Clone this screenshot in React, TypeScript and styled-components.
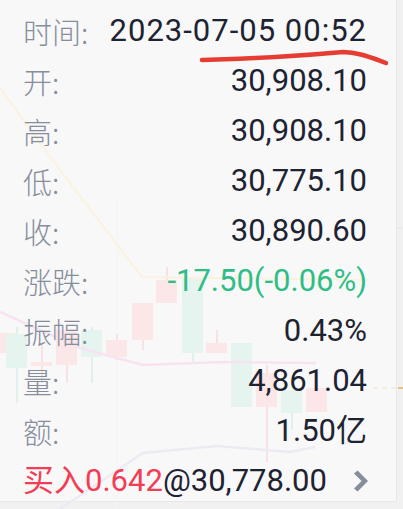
import styled, { createGlobalStyle } from "styled-components";

const GlobalStyle = createGlobalStyle`
  html, body {
    margin: 0;
    padding: 0;
    background: #f1f1f2;
  }
`;

interface Row {
  label: string;
  value: string;
  tone?: "down";
  wide?: boolean;
}

const rows: Row[] = [
  { label: "时间:", value: "2023-07-05 00:52", wide: true },
  { label: "开:", value: "30,908.10" },
  { label: "高:", value: "30,908.10" },
  { label: "低:", value: "30,775.10" },
  { label: "收:", value: "30,890.60" },
  { label: "涨跌:", value: "-17.50(-0.06%)", tone: "down" },
  { label: "振幅:", value: "0.43%" },
  { label: "量:", value: "4,861.04" },
  { label: "额:", value: "1.50亿" },
];

// faint candles behind the tooltip: x, bodyTop, bodyBottom, wickTop, wickBottom, up?
const candles: [number, number, number, number, number, boolean][] = [
  [-6, 333, 353, 333, 353, true],
  [6, 334, 368, 327, 403, false],
  [31, 362, 366, 343, 383, true],
  [56, 330, 365, 330, 383, true],
  [81, 330, 357, 327, 383, false],
  [106, 340, 357, 334, 360, true],
  [132, 303, 340, 303, 350, true],
  [156, 280, 303, 267, 303, true],
  [182, 277, 353, 277, 363, false],
  [206, 343, 353, 330, 353, true],
  [231, 343, 407, 343, 407, false],
  [256, 373, 407, 365, 462, true],
  [281, 390, 413, 390, 430, false],
  [306, 388, 412, 383, 412, true],
];

const Chart = () => (
  <ChartLayer width={403} height={509} viewBox="0 0 403 509">
    <line x1={117} y1={200} x2={117} y2={509} stroke="#f4f4f5" strokeWidth={1} />
    <line x1={397} y1={228} x2={403} y2={228} stroke="#e4e4e6" strokeWidth={1} />
    {candles.map(([x, t, b, wt, wb, up], i) => (
      <g key={i}>
        <line
          x1={x + 11}
          y1={wt}
          x2={x + 11}
          y2={wb}
          stroke={up ? "#f9e0e3" : "#dff1ea"}
          strokeWidth={2}
        />
        <rect
          x={x}
          y={t}
          width={21}
          height={b - t}
          fill={up ? "#fbe6e8" : "#e5f4ee"}
        />
      </g>
    ))}
    <polyline
      points="0,88 60,170 142,277 370,280"
      fill="none"
      stroke="#faf2dd"
      strokeWidth={2}
    />
    <polyline
      points="0,312 80,348 143,365 220,362 316,363"
      fill="none"
      stroke="#f7e3ef"
      strokeWidth={2.5}
    />
    <polyline
      points="60,509 143,453 217,446 290,452 315,447"
      fill="none"
      stroke="#ecebf4"
      strokeWidth={2.5}
    />
    <line
      x1={373}
      y1={388}
      x2={397}
      y2={388}
      stroke="#f6eedb"
      strokeWidth={2}
      strokeDasharray="5 4"
    />
    <line x1={398} y1={388} x2={403} y2={388} stroke="#e6c47c" strokeWidth={2} />
  </ChartLayer>
);

const Chevron = () => (
  <ChevronIcon width={16} height={22} viewBox="0 0 16 22">
    <path d="M1 3.5 L4.6 0.5 L15 11 L4.6 21.5 L1 18.5 L8.6 11 Z" fill="#868e9c" />
  </ChevronIcon>
);

const App = () => {
  return (
    <Page>
      <GlobalStyle />
      <Panel>
        <Chart />
        {rows.map((row) => (
          <InfoRow key={row.label}>
            <Label>{row.label}</Label>
            <Value tone={row.tone} wide={row.wide}>
              {row.value}
            </Value>
          </InfoRow>
        ))}
        <InfoRow>
          <Order>
            <Side>买入0.642</Side>@30,778.00
          </Order>
          <Chevron />
        </InfoRow>
        <Underline width={403} height={80} viewBox="0 0 403 80">
          <path
            d="M202 60 C 240 59, 300 56, 343 52 C 358 52, 372 58, 386 63"
            fill="none"
            stroke="#e63d33"
            strokeWidth={4.5}
            strokeLinecap="round"
          />
        </Underline>
      </Panel>
    </Page>
  );
};

export default App;

const Page = styled.div`
  width: 403px;
  height: 509px;
  overflow: hidden;
  background: #f1f1f2;
`;

const Panel = styled.div`
  position: relative;
  width: 397px;
  height: 502px;
  box-sizing: border-box;
  padding: 6px 29px 0 23px;
  background: #f8f8f9;
  border-right: 1px solid #e8e8ea;
  border-bottom: 1px solid #e8e8ea;
`;

const ChartLayer = styled.svg`
  position: absolute;
  top: 0;
  left: 0;
  overflow: visible;
  pointer-events: none;
`;

const Underline = styled.svg`
  position: absolute;
  top: 0;
  left: 0;
  pointer-events: none;
`;

const InfoRow = styled.div`
  position: relative;
  height: 50px;
  display: flex;
  justify-content: space-between;
  align-items: center;
`;

const Label = styled.span`
  font-family: "Noto Sans CJK SC", "Roboto", sans-serif;
  font-size: 29px;
  font-weight: 300;
  line-height: 50px;
  color: #868e9c;
`;

const Value = styled.span<{ tone?: "down"; wide?: boolean }>`
  font-family: "Roboto", "Noto Sans CJK SC", sans-serif;
  font-size: 31px;
  line-height: 50px;
  letter-spacing: ${({ wide }) => (wide ? "1px" : "0")};
  color: ${({ tone }) => (tone === "down" ? "#2ebd85" : "#1e2331")};
`;

const Order = styled.span`
  font-family: "Roboto", "Noto Sans CJK SC", sans-serif;
  font-size: 31px;
  line-height: 50px;
  color: #1e2331;
`;

const Side = styled.span`
  color: #f23d55;
`;

const ChevronIcon = styled.svg`
  margin-right: -2px;
`;
